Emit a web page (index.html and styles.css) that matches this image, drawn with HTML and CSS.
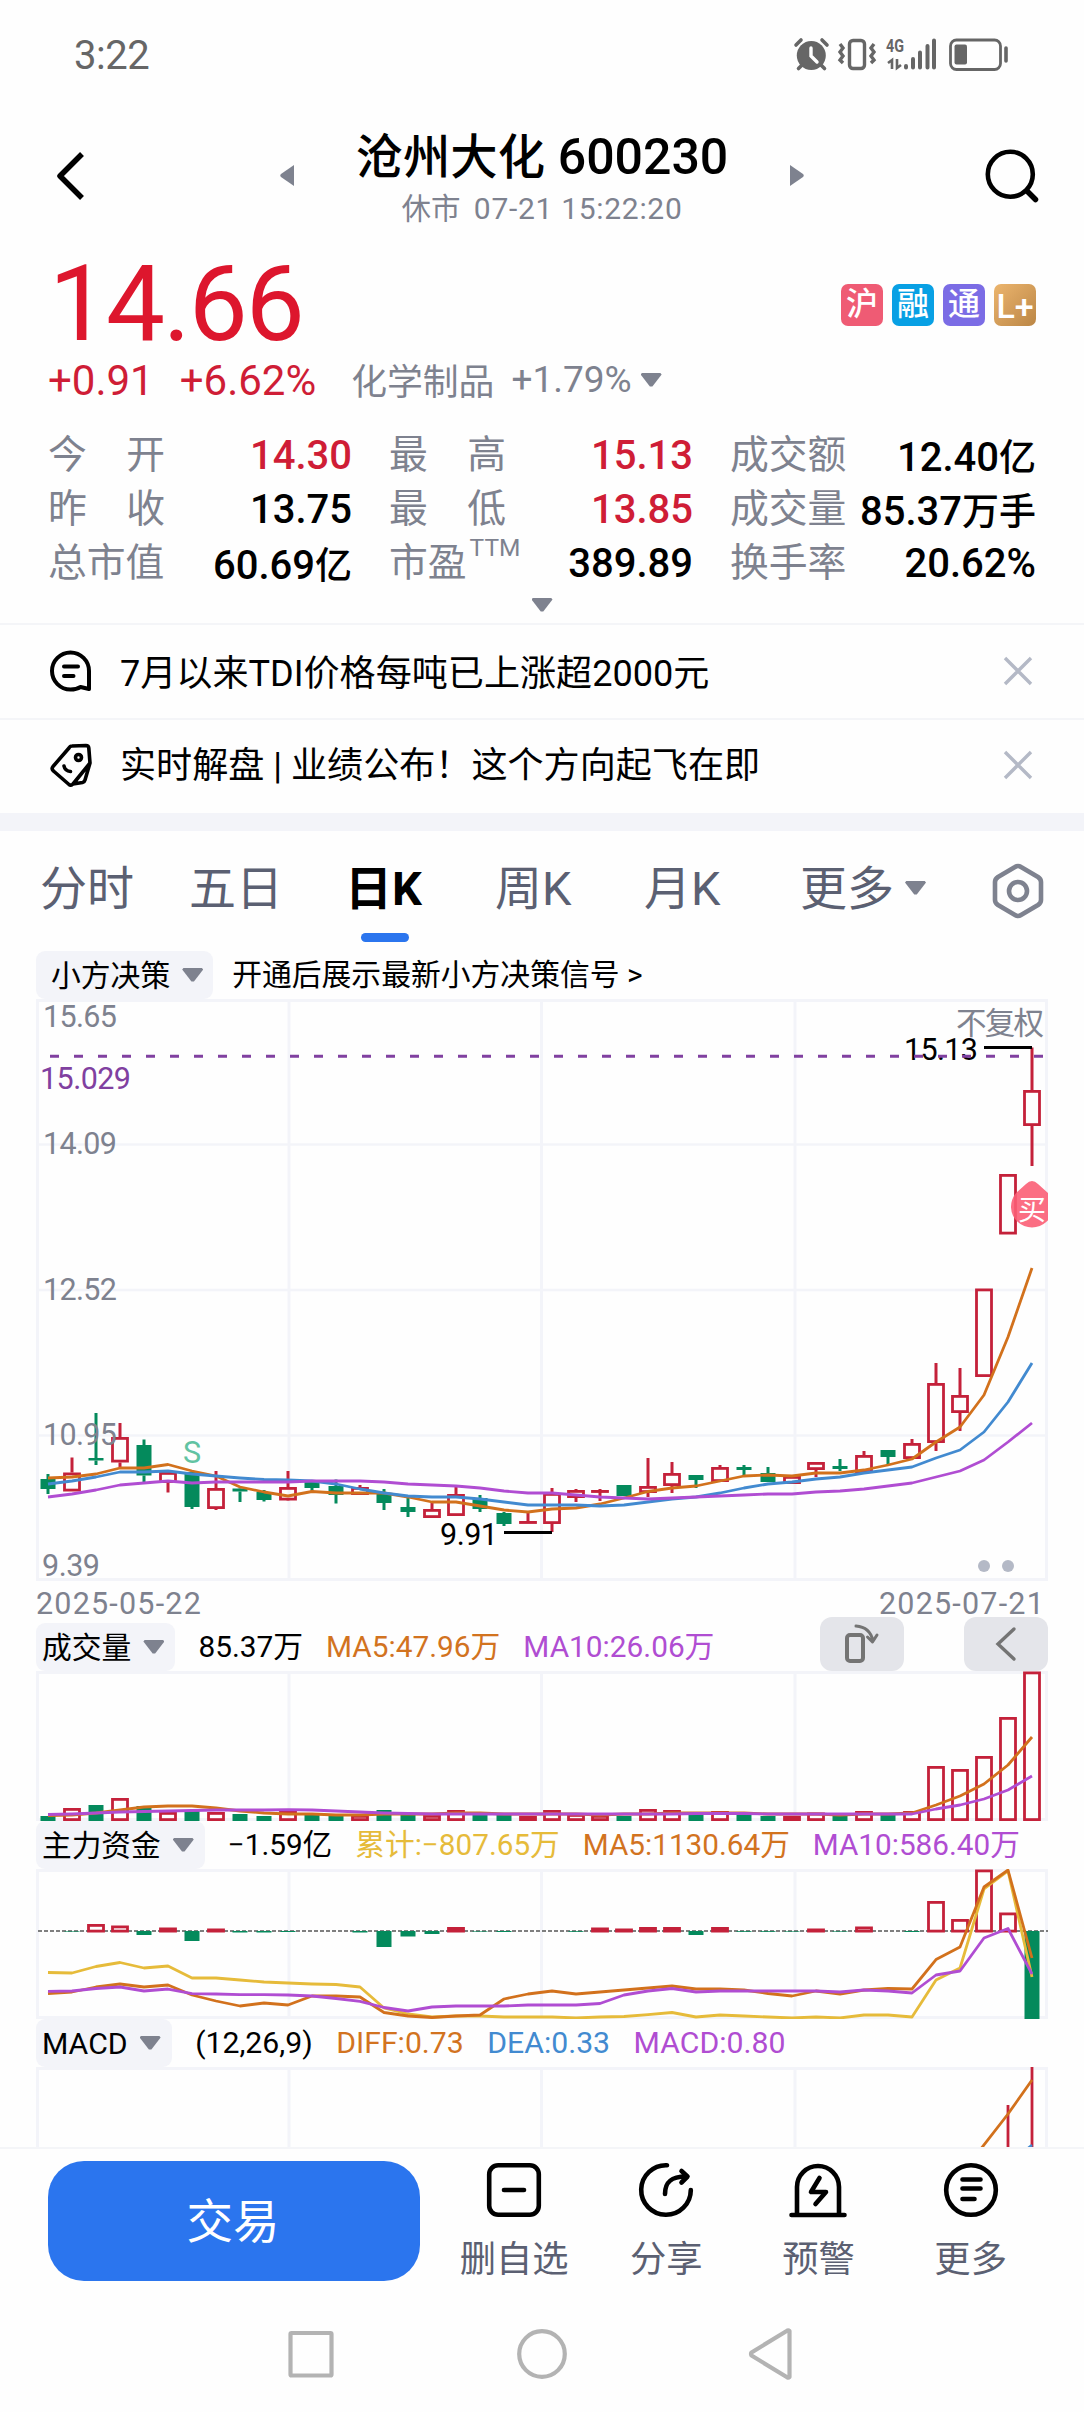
FILE: index.html
```
<!DOCTYPE html>
<html lang="zh-CN">

<head>
  <meta charset="UTF-8" />
  <meta name="viewport" content="width=device-width, initial-scale=1.0" />
  <title>沧州大化 600230</title>
  <link rel="stylesheet" href="styles.css">
</head>

<body>
  <div class="status-bar">
    <span class="time">3:22</span>
    <svg class="status-icons" width="220" height="36" viewBox="792 37 220 36" fill="none" stroke="#666">
      <!-- 闹钟 -->
      <circle cx="811.3" cy="55.5" r="14.5" fill="#666" stroke="none" />
      <path d="M811 48v8l6 6" stroke="#fff" stroke-width="3.4" stroke-linecap="round" />
      <path d="M796 45l5-5M827 45l-5-5M802 65l-3.500 3.500M821 65l3.500 3.500" stroke-width="3.600" stroke-linecap="round" />
      <!-- 震动 -->
      <rect x="849.500" y="40.500" width="15" height="28" rx="3.500" stroke-width="3.400" />
      <path d="M840 44l3 4-3 4 3 4-3 4 3 3M874 44l-3 4 3 4-3 4 3 4-3 3" stroke-width="3.400" />
      <!-- 信号 -->
      <text class="net" x="886" y="52" textLength="18" lengthAdjust="spacingAndGlyphs">4G</text>
      <path d="M888 63l4-3v9M897 59v9l4-3" stroke-width="2.600" />
      <path d="M906 66v1.500M913 59v8.500M920 52.500v15M927.500 46v21.500M934 40.500v27" stroke-width="4" stroke-linecap="round" />
      <!-- 电池 -->
      <rect x="950.500" y="40" width="50" height="29.500" rx="6" stroke-width="2.800" />
      <rect x="954.500" y="44.500" width="12.500" height="20" rx="2" fill="#666" stroke="none" />
      <path d="M1006 48v13" stroke-width="3.600" stroke-linecap="round" />
    </svg>
  </div>

  <div class="header">
    <svg class="back" width="30" height="52" viewBox="0 0 30 52"><path d="M26 4L4 26l22 22" fill="none" stroke="#000" stroke-width="5.500" stroke-linejoin="round" /></svg>
    <svg class="prev" width="14" height="21" viewBox="0 0 14 21"><path d="M14 0v21L1 12q-1.500-1.500 0-3z" fill="#7e828f" /></svg>
    <div class="title">
      <h1>沧州大化 <b>600230</b></h1>
      <p>休市 <span>07-21 15:22:20</span></p>
    </div>
    <svg class="next" width="14" height="21" viewBox="0 0 14 21"><path d="M0 0v21l13-9q1.500-1.500 0-3z" fill="#7e828f" /></svg>
    <svg class="search" width="56" height="56" viewBox="984 148 56 56" fill="none" stroke="#000" stroke-linecap="round"><circle cx="1010.300" cy="174.300" r="22.500" stroke-width="4.600" /><path d="M1027 191l8.500 8.500" stroke-width="5.500" /></svg>
  </div>

  <div class="quote">
    <div class="price">14.66</div>
    <div class="badges">
      <span class="hu">沪</span><span class="rong">融</span><span class="tong">通</span><span class="level">L+</span>
    </div>
  </div>
  <div class="change">
    <span class="up">+0.91</span><span class="up pct">+6.62%</span>
    <span class="sector">化学制品</span><span class="sector-pct">+1.79%</span><i class="tri"></i>
  </div>

  <div class="stats">
    <div><label><em>今</em><em>开</em></label><b class="up">14.30</b></div>
    <div><label><em>最</em><em>高</em></label><b class="up">15.13</b></div>
    <div><label>成交额</label><b>12.40<small>亿</small></b></div>
    <div><label><em>昨</em><em>收</em></label><b>13.75</b></div>
    <div><label><em>最</em><em>低</em></label><b class="up">13.85</b></div>
    <div><label>成交量</label><b>85.37<small>万手</small></b></div>
    <div><label>总市值</label><b>60.69<small>亿</small></b></div>
    <div><label class="pe">市盈<sup>TTM</sup></label><b>389.89</b></div>
    <div><label>换手率</label><b>20.62%</b></div>
  </div>
  <div class="expand"><i class="tri"></i></div>

  <div class="notice">
    <svg width="44" height="44" viewBox="0 0 44 44" fill="none" stroke="#000" stroke-width="4" stroke-linecap="round" stroke-linejoin="round">
      <path d="M40 40V22A18.500 18.500 0 1 0 21.500 40.500q6 0 10-2.500zM15 17.500h14M15 27h9.500" />
    </svg>
    <span>7月以来TDI价格每吨已上涨超2000元</span>
    <svg class="close" width="30" height="30" viewBox="0 0 30 30"><path d="M2 2l26 26M28 2L2 28" stroke="#b4b9c6" stroke-width="3.400" /></svg>
  </div>
  <div class="notice second">
    <svg width="44" height="44" viewBox="0 0 44 44" fill="none" stroke="#000" stroke-width="3.600" stroke-linecap="round" stroke-linejoin="round">
      <path d="M23 3l14-.5q2.500 0 2.800 2.500L41 20 24 41q-2 2-4 .5L4.500 28q-2.500-2-.5-4.500L20 5q1-2 3-2zM41 20l-5 17q-.5 2-2.500 2.500L24 41M15 23q1 5 6.500 5.500" /><circle cx="29.500" cy="14.500" r="3" />
    </svg>
    <span>实时解盘 | 业绩公布！这个方向起飞在即</span>
    <svg class="close" width="30" height="30" viewBox="0 0 30 30"><path d="M2 2l26 26M28 2L2 28" stroke="#b4b9c6" stroke-width="3.400" /></svg>
  </div>

  <div class="tabs">
    <span>分时</span>
    <span>五日</span>
    <span class="active">日K</span>
    <span>周K</span>
    <span>月K</span>
    <span class="more">更多<i class="tri"></i></span>
    <svg width="52" height="56" viewBox="0 0 52 56" fill="none" stroke="#7e828f" stroke-width="4.600" stroke-linejoin="round"><path d="M23 4q3-2 6 0l17 10q3 2 3 5v18q0 3-3 5L29 52q-3 2-6 0L6 42q-3-2-3-5V19q0-3 3-5z" /><circle cx="26" cy="28" r="9" /></svg>
  </div>

  <div class="ind decision">
    <div class="chip">小方决策<i class="tri"></i></div>
    <span>开通后展示最新小方决策信号 &gt;</span>
  </div>
  <svg id="kline" class="chart" width="1012" height="582" viewBox="36 999 1012 582"></svg>
  <div class="dates"><span>2025-05-22</span><span>2025-07-21</span></div>

  <div class="ind">
    <div class="chip">成交量<i class="tri"></i></div>
    <span>85.37万</span>
    <span class="orange">MA5:47.96万</span>
    <span class="purple">MA10:26.06万</span>
    <div class="tools">
      <button><svg width="38" height="42" viewBox="0 0 38 42" fill="none" stroke="#747474" stroke-width="4" stroke-linecap="round" stroke-linejoin="round"><rect x="4" y="12" width="16" height="26" rx="3" /><path d="M13 3q14 1 17 15M34 12l-4.500 7-5-5" stroke-width="3" /></svg></button>
      <button><svg width="22" height="36" viewBox="0 0 22 36" fill="none" stroke="#747474" stroke-width="3.400" stroke-linecap="round"><path d="M19 3L3 18l16 15" /></svg></button>
    </div>
  </div>
  <svg id="volume" class="chart" width="1012" height="150" viewBox="36 1671 1012 150"></svg>

  <div class="ind fund-row">
    <div class="chip">主力资金<i class="tri"></i></div>
    <span>−1.59亿</span>
    <span class="yellow">累计:−807.65万</span>
    <span class="orange">MA5:1130.64万</span>
    <span class="purple">MA10:586.40万</span>
  </div>
  <svg id="fund" class="chart" width="1012" height="150" viewBox="36 1869 1012 150"></svg>

  <div class="ind macd-row">
    <div class="chip">MACD<i class="tri"></i></div>
    <span>(12,26,9)</span>
    <span class="orange">DIFF:0.73</span>
    <span class="blue">DEA:0.33</span>
    <span class="purple">MACD:0.80</span>
  </div>
  <svg id="macd" class="chart" width="1012" height="80" viewBox="36 2067 1012 80"></svg>

  <div class="bottom-bar">
    <button class="trade">交易</button>
    <div class="action">
      <svg width="58" height="56" viewBox="0 0 58 56"><rect x="4.200" y="3.200" width="49.600" height="49.600" rx="9" /><path d="M19 28h20" /></svg>
      删自选
    </div>
    <div class="action">
      <svg width="58" height="56" viewBox="0 0 58 56"><path d="M30 3.200A24.800 24.800 0 1 0 53.800 28M28 32C28 20 34 14.500 49 14.500M44.500 9l6 5.500-6 6" /></svg>
      分享
    </div>
    <div class="action">
      <svg width="58" height="56" viewBox="0 0 58 56"><path d="M2.500 53h53M8 53V25a21 21 0 0 1 42 0v28M30.500 16L22 30h15L26.500 42" /></svg>
      预警
    </div>
    <div class="action">
      <svg width="58" height="56" viewBox="0 0 58 56"><circle cx="29" cy="28" r="24.800" /><path d="M20.500 17.500h18M20.500 26.500h18M20.500 37h12" /></svg>
      更多
    </div>
  </div>

  <div class="nav-bar">
    <svg width="504" height="52" viewBox="288 2328 504 52" fill="none" stroke="#b3b3b3" stroke-width="4.200" stroke-linejoin="round">
      <rect x="290.500" y="2333" width="41" height="42.500" rx="1" />
      <circle cx="542" cy="2354" r="22.800" />
      <path d="M789.500 2331v46q-1 1-2 .5l-36-22q-1-1.500 0-3l36-22q1-.5 2 .5z" />
    </svg>
  </div>

  <script src="chart.js"></script>
</body>

</html>
```
FILE: styles.css
```
* {
  box-sizing: border-box;
}

body {
  margin: 0;
  width: 1084px;
  height: 2412px;
  overflow: hidden;
  background: #fefefe;
  color: #000;
  font-family: Roboto, "Noto Sans CJK SC", sans-serif;
}

h1,
p {
  margin: 0;
}

i,
em {
  font-style: normal;
}

svg {
  display: block;
  flex: none;
}

button {
  border: 0;
  padding: 0;
  font-family: inherit;
}

.up {
  color: #cf1d36;
}

.orange {
  color: #d2731f;
}

.purple {
  color: #b04dd2;
}

.blue {
  color: #428ad0;
}

.yellow {
  color: #e6bb3a;
}

.tri {
  display: inline-block;
  flex: none;
  width: 21px;
  height: 14px;
  background: #7e828f;
  clip-path: polygon(6% 0, 94% 0, 100% 10%, 56% 96%, 44% 96%, 0 10%);
}

/* 状态栏 */
.status-bar {
  display: flex;
  justify-content: space-between;
  height: 110px;
  padding: 37px 72px 0 74px;
  color: #666;
}

.time {
  font-size: 40px;
  line-height: 37px;
  letter-spacing: -0.5px;
}

.net {
  font-size: 18px;
  font-weight: 700;
  fill: #666;
  stroke: none;
}

/* 标题 */
.header {
  display: flex;
  height: 140px;
  padding: 0 44px 0 56px;
}

.back {
  margin-top: 40px;
}

.prev {
  margin: 55px 0 0 194px;
}

.next {
  margin-top: 55px;
}

.title {
  width: 496px;
  text-align: center;
  padding-top: 17px;
}

.title h1 {
  font-size: 47.3px;
  line-height: 60px;
  font-weight: 500;
  white-space: nowrap;
}

.title b {
  font-size: 50px;
  font-weight: 500;
  margin-left: 1px;
}

.title p {
  font-size: 29.5px;
  line-height: 40px;
  margin-top: 1px;
  color: #7e828f;
}

.title p span {
  font-size: 30px;
  margin-left: 6px;
  letter-spacing: 0.7px;
}

.search {
  margin: 38px 0 0 180px;
}

/* 价格 */
.quote {
  display: flex;
  justify-content: space-between;
  height: 105px;
  padding: 0 48px 0 49px;
}

.price {
  font-size: 105px;
  line-height: 109px;
  letter-spacing: -2px;
  color: #dd162d;
}

.badges {
  display: flex;
  gap: 9px;
  margin-top: 34px;
}

.badges span {
  width: 42px;
  height: 42px;
  border-radius: 7px;
  color: #fff;
  font-size: 32px;
  font-weight: 500;
  line-height: 41px;
  text-align: center;
}

.hu {
  background: #ef5b74;
}

.rong {
  background: #08a0e4;
}

.tong {
  background: #7b6ce5;
}

.badges .level {
  background: linear-gradient(135deg, #ecb56e, #bb8645);
  font-size: 34px;
  line-height: 44px;
}

.change {
  display: flex;
  align-items: center;
  height: 50px;
  padding-left: 48px;
  font-size: 42px;
}

.pct {
  margin-left: 26px;
}

.sector,
.sector-pct {
  font-size: 35.8px;
  color: #7e828f;
  margin-left: 35px;
}

.sector,
.sector-pct {
  padding-bottom: 2px;
}

.sector-pct {
  font-size: 37px;
  margin-left: 17px;
  margin-right: 9px;
}

/* 行情指标 */
.stats {
  display: grid;
  grid-template-columns: 304px 304px 306px;
  grid-auto-rows: 54px;
  column-gap: 37px;
  padding: 23px 0 0 48px;
  height: 188px;
}

.stats div {
  display: flex;
  justify-content: space-between;
  align-items: center;
}

.stats label {
  display: flex;
  justify-content: space-between;
  width: 117px;
  height: 54px;
  font-size: 38.8px;
  line-height: 54px;
  color: #7e828f;
  white-space: nowrap;
}

.stats .pe {
  justify-content: flex-start;
}

.stats sup {
  font-size: 24.5px;
  line-height: 28px;
  margin: -2px 0 0 3px;
}

.stats b {
  font-size: 40px;
  font-weight: 500;
  white-space: nowrap;
}

.stats small {
  font-size: 37px;
}

.expand {
  display: flex;
  justify-content: center;
  height: 30px;
  padding-top: 5px;
}

/* 资讯条 */
.notice {
  display: flex;
  align-items: center;
  height: 95px;
  padding: 0 51px 2px 49px;
  border-top: 2px solid #f4f5f8;
  font-size: 36.1px;
}

.notice span {
  flex: 1;
  margin-left: 27px;
  padding-bottom: 2px;
}

.notice.second {
  height: 113px;
  padding-bottom: 3px;
  border-bottom: 18px solid #f3f4f9;
}

.notice.second span {
  padding-bottom: 6px;
}

/* 周期切换 */
.tabs {
  display: grid;
  grid-template-columns: 149px 156px 150px 149px 156px 192px 52px;
  height: 119px;
  padding: 22px 0 0 40px;
  font-size: 47px;
  line-height: 71px;
  color: #5b6072;
}

.tabs span {
  white-space: nowrap;
}

.tabs .active {
  color: #000;
  font-weight: 700;
  width: 80px;
}

.active::after {
  content: "";
  display: block;
  width: 48px;
  height: 9px;
  margin: 9px auto 0;
  border-radius: 4.5px;
  background: #2b75ee;
}

.more .tri {
  margin-left: 11px;
  vertical-align: 10px;
}

.tabs svg {
  margin-top: 10px;
}

/* 指标标题行 */
.ind {
  display: flex;
  align-items: flex-end;
  gap: 23px;
  height: 50px;
  padding: 0 36px;
  font-size: 29.8px;
  line-height: 49px;
  white-space: nowrap;
}

.chip {
  display: flex;
  align-items: center;
  gap: 12px;
  height: 48px;
  padding: 0 11px 0 6px;
  border-radius: 9px;
  background: #f3f4f9;
}

.decision {
  height: 49px;
  gap: 19px;
}

.decision .chip {
  padding: 0 10px 0 15px;
}

.tools {
  display: flex;
  gap: 60px;
  margin-left: auto;
}

.tools button {
  display: flex;
  align-items: center;
  justify-content: center;
  width: 84px;
  height: 54px;
  border-radius: 12px;
  background: #e4e5ea;
}

.fund-row,
.macd-row {
  height: 48px;
}

.fund-row {
  font-size: 29.7px;
}

.macd-row {
  gap: 23.5px;
  font-size: 30.2px;
}

.chart {
  margin-left: 36px;
}

.chart text {
  font-size: 30.5px;
  fill: #7e828f;
}

.chart .cost {
  fill: #8040a0;
}

.chart .mark {
  fill: #000;
}

.chart .sell {
  fill: #62c3a2;
}

.chart .buy {
  fill: #fff;
  font-size: 28px;
}

.dates {
  display: flex;
  justify-content: space-between;
  height: 40px;
  padding: 0 39px 0 36px;
  font-size: 30.5px;
  line-height: 45px;
  letter-spacing: 1.2px;
  color: #7e828f;
}

/* 底部操作 */
.bottom-bar {
  display: flex;
  height: 170px;
  padding: 12px 0 0 48px;
  border-top: 2px solid #f4f5f8;
}

.trade {
  width: 372px;
  height: 120px;
  padding: 0 2px 7px 0;
  margin-right: 18px;
  border-radius: 36px;
  background: #2b75ee;
  color: #fff;
  font-size: 46.5px;
}

.action {
  display: flex;
  flex-direction: column;
  align-items: center;
  gap: 15px;
  width: 152.200px;
  margin-top: 1px;
  font-size: 36.300px;
  line-height: 54px;
  color: #5b6072;
}

.action svg {
  fill: none;
  stroke: #000;
  stroke-width: 4.6;
  stroke-linecap: round;
  stroke-linejoin: round;
}

.nav-bar {
  padding: 11px 0 0 288px;
}
```
FILE: chart.js
```
const RED = '#c4213a';
const GREEN = '#048a5c';
const ORANGE = '#d2711c';
const BLUE = '#428ad0';
const PURPLE = '#b04dd2';
const YELLOW = '#e6bb3a';
const GRID = '#f3f4f9';

// 第 i 根柱子的中心
function cx(i) {
  return 48 + 24 * i;
}

function line(x1, y1, x2, y2, color, w, extra) {
  return `<line x1="${x1}" y1="${y1}" x2="${x2}" y2="${y2}" stroke="${color}" stroke-width="${w}" ${extra || ''}/>`;
}

function curve(ys, color) {
  const pts = ys.map((y, i) => cx(i) + ',' + y).join(' ');
  return `<polyline points="${pts}" fill="none" stroke="${color}" stroke-width="2.8" stroke-linejoin="round"/>`;
}

// 红色空心, 绿色实心
function bar(i, type, top, bottom) {
  if (type == 'r') {
    const h = Math.max(bottom - top - 2.8, 0.1);
    return `<rect x="${cx(i) - 7.5}" y="${top + 1.4}" width="15" height="${h}" fill="none" stroke="${RED}" stroke-width="2.8"/>`;
  }
  return `<rect x="${cx(i) - 7.5}" y="${top}" width="15" height="${bottom - top}" fill="${GREEN}"/>`;
}

function label(x, y, text, len, cls) {
  return `<text x="${x}" y="${y}" textLength="${len}" class="${cls || ''}">${text}</text>`;
}

function grid(top, bottom, rows) {
  let s = `<rect x="37.5" y="${top + 1.5}" width="1009" height="${bottom - top - 3}" fill="none" stroke="${GRID}" stroke-width="3"/>`;
  [289, 541.5, 795].forEach((x) => (s += line(x, top, x, bottom, GRID, 3)));
  (rows || []).forEach((y) => (s += line(38, y, 1046, y, GRID, 2.6)));
  return s;
}

// [类型, 最高, 实体上沿, 实体下沿, 最低]
const candles = [
  ['g', 1474, 1479, 1489, 1494], ['r', 1457.5, 1472.5, 1491.5, 1491.5], ['g', 1413, 1458, 1460.5, 1465],
  ['r', 1423, 1437, 1462.5, 1467], ['g', 1439.5, 1445, 1475.5, 1482], ['r', 1472, 1472, 1483, 1492.5],
  ['g', 1472, 1472, 1507, 1509], ['r', 1471, 1488, 1509, 1510], ['g', 1488, 1488.5, 1491.5, 1502],
  ['g', 1490, 1492, 1500, 1501.5], ['r', 1471, 1487, 1500.5, 1501], ['g', 1482, 1482, 1488, 1491],
  ['g', 1479.5, 1486, 1495, 1503.5], ['r', 1485, 1487, 1495, 1495], ['g', 1489, 1493, 1503, 1510],
  ['g', 1498, 1507, 1512, 1517], ['r', 1503, 1509, 1518, 1518], ['r', 1487, 1494, 1516, 1516],
  ['g', 1495, 1498, 1509, 1512], ['g', 1512, 1513, 1524, 1526], ['r', 1512, 1521, 1523, 1523],
  ['r', 1488, 1493, 1524, 1532], ['r', 1489, 1490, 1498, 1502], ['r', 1489, 1490, 1492, 1501],
  ['g', 1485, 1485, 1496, 1496], ['r', 1458, 1486, 1493, 1497], ['r', 1462, 1473, 1486, 1493],
  ['g', 1475, 1475, 1480, 1488], ['r', 1465, 1467, 1482, 1482], ['g', 1465, 1467, 1470, 1477],
  ['g', 1467, 1473, 1482, 1482], ['r', 1476, 1476, 1484, 1484], ['r', 1462, 1462, 1470, 1477],
  ['g', 1459, 1466, 1469, 1471], ['r', 1451, 1455, 1473, 1473], ['g', 1450, 1450, 1457, 1465],
  ['r', 1439, 1443, 1459, 1459], ['r', 1363, 1383, 1443, 1451], ['r', 1368, 1395, 1413, 1431],
  ['r', 1288.5, 1288.5, 1377, 1377], ['r', 1174, 1174, 1234.5, 1234.5], ['r', 1047.5, 1090, 1126, 1166],
];
const ma5 = [1478, 1477, 1474, 1468, 1468, 1464.5, 1471, 1476, 1487, 1492, 1496, 1491.5, 1493, 1493, 1493, 1497, 1502, 1502, 1506, 1510, 1512, 1509, 1508, 1504, 1498, 1491.5, 1488, 1486, 1481, 1476, 1475, 1476, 1473, 1473, 1470, 1465, 1459, 1442, 1427, 1395, 1337, 1268];
const ma10 = [1484, 1481, 1477, 1472, 1472, 1471, 1474, 1476, 1478, 1479.5, 1480, 1481, 1484, 1489, 1493, 1496, 1497, 1497, 1499, 1502, 1505, 1505, 1505, 1506, 1505, 1502, 1499, 1497, 1493, 1488, 1484, 1482, 1479, 1477, 1473, 1470, 1467, 1458, 1450, 1432, 1402, 1363];
const ma20 = [1497, 1494, 1490, 1485, 1483, 1481, 1483, 1482, 1482, 1482, 1482, 1481, 1481, 1481, 1482, 1484, 1485, 1486, 1488, 1491, 1493, 1493, 1495, 1497, 1498, 1499, 1498, 1497, 1496, 1495, 1494, 1494, 1492, 1491, 1489, 1486, 1483, 1477, 1471, 1460, 1442, 1423];

let k = grid(999, 1581, [1144.5, 1290, 1435.5]);
candles.forEach((c, i) => {
  const color = c[0] == 'r' ? RED : GREEN;
  if (c[2] > c[1]) k += line(cx(i), c[1], cx(i), c[2], color, 3);
  if (c[4] > c[3]) k += line(cx(i), c[3], cx(i), c[4], color, 3);
  k += bar(i, c[0], c[2], c[3]);
});
k += curve(ma5, ORANGE) + curve(ma10, BLUE) + curve(ma20, PURPLE);
k += label(43, 1027, '15.65', 74) + label(43, 1154, '14.09', 74) + label(43, 1300, '12.52', 74);
k += label(43, 1445, '10.95', 74) + label(42, 1576, '9.39', 58) + label(40, 1089, '15.029', 91, 'cost');
k += label(956, 1034, '不复权', 88);
k += label(904, 1060, '15.13', 74, 'mark') + line(984, 1047.5, 1032, 1047.5, '#000', 3);
k += label(440, 1545, '9.91', 58, 'mark') + line(504, 1532.5, 552, 1532.5, '#000', 3);
k += line(50, 1056.3, 1043, 1056.3, '#8040a0', 3, 'stroke-dasharray="9 15"');
k += label(183, 1463, 'S', 19, 'sell');
k += '<path d="M1032 1181q3 0 6 3l10 9a21 21 0 1 1-32 0l10-9q3-3 6-3z" fill="#fb5e76" fill-opacity=".9"/>' + label(1018, 1220, '买', 28, 'buy');
k += '<circle cx="984" cy="1566" r="6" fill="#b4b9c6"/><circle cx="1008" cy="1566" r="6" fill="#b4b9c6"/>';
document.getElementById('kline').innerHTML = k;

// 成交量
const volTop = [1816, 1808, 1805, 1798, 1806, 1812, 1811, 1812, 1814, 1816, 1811, 1815, 1816, 1815, 1810, 1815, 1815, 1810, 1815, 1815, 1816, 1810, 1814, 1815, 1816, 1809, 1810, 1815, 1811, 1815, 1816, 1816, 1812.5, 1816, 1811, 1815, 1811, 1766, 1769, 1756, 1717, 1671.5];
const vol5 = [1815.5, 1815, 1813, 1810, 1807, 1806, 1806, 1808, 1811, 1813, 1814, 1814, 1815, 1815, 1814, 1814, 1814, 1813, 1813, 1814, 1814, 1814, 1814, 1815, 1814, 1814, 1813, 1813, 1813, 1813, 1814, 1814, 1814, 1815, 1814, 1814, 1813, 1805, 1796, 1784, 1765, 1737];
const vol10 = [1814.5, 1814, 1813, 1812, 1811.5, 1811, 1810.5, 1810, 1810, 1810, 1809.6, 1810, 1811, 1812, 1813, 1813.5, 1814, 1814, 1814, 1814, 1814, 1814, 1814, 1814, 1814, 1814, 1814, 1813.5, 1813.5, 1813.5, 1814, 1814, 1814, 1814, 1814, 1814, 1814, 1809, 1805, 1799, 1790, 1776];
let v = grid(1671, 1821);
volTop.forEach((y, i) => (v += bar(i, candles[i][0], y, 1821)));
v += curve(vol5, ORANGE) + curve(vol10, PURPLE);
document.getElementById('volume').innerHTML = v;

// 主力资金, 正数在零轴上方
const flow = [0, -0.6, 7, 5.5, -4, 3.5, -10, 2.5, -1.5, -1.5, -1, 0, 0, -1.5, -16, -5.5, -3, 4, -0.6, -1, 0, 0, -0.8, 3.5, 2.5, 4, 4, -4, 4, -0.8, -0.8, -0.6, 2.5, -0.6, 4.5, 0, -1, 30, 12, 61.5, 18.5, -88];
const total = [1972.5, 1973, 1966.5, 1962.5, 1968, 1966, 1978, 1978, 1980, 1982, 1983, 1984, 1984.5, 1987, 2008, 2014, 2017, 2016, 2016, 2017, 2017, 2017, 2018, 2017, 2016.5, 2014.6, 2012.5, 2017, 2015, 2016, 2017, 2018, 2017, 2018, 2015, 2015, 2017, 1980, 1968, 1889, 1871, 1977];
const flow5 = [1993.6, 1992, 1987, 1984, 1987, 1985, 1995, 2001, 2006, 2003, 2005, 1996, 1996, 1997, 2012.5, 2016, 2017.5, 2016, 2015, 1999, 1994, 1991, 1994, 1992, 1990, 1988, 1986, 1989, 1989, 1990, 1993.5, 1996, 1991, 1994, 1990, 1988.5, 1989, 1959.6, 1947, 1887, 1870, 1958];
const flow10 = [1991.4, 1991, 1988.5, 1987, 1991, 1989, 1993.6, 1994, 1994.6, 1994.6, 1995, 1996, 1998.5, 2001.4, 2007.5, 2011, 2007, 2006, 2006, 2006, 2005, 2005, 2005, 2003.5, 1995, 1991, 1988.5, 1992, 1991, 1991, 1991, 1991, 1991, 1992, 1990, 1991, 1993, 1975, 1971, 1938, 1928.5, 1974];
let f = grid(1869, 2019);
f += line(38, 1931, 1048, 1931, '#555', 1.6, 'stroke-dasharray="4 2"');
flow.forEach((n, i) => {
  if (n > 0) f += bar(i, 'r', 1931 - n, 1932.5);
  if (n < 0) f += bar(i, 'g', 1931, 1931 - n);
});
f += curve(total, YELLOW) + curve(flow5, ORANGE) + curve(flow10, PURPLE);
document.getElementById('fund').innerHTML = f;

// MACD
let m = grid(2067, 2250);
m += line(1008, 2105, 1008, 2150, RED, 2.8) + line(1032, 2067, 1032, 2150, RED, 2.8);
m += `<path d="M980 2150L1008 2114L1032 2080" fill="none" stroke="${ORANGE}" stroke-width="2.800"/>`;
m += line(1027, 2149, 1032, 2145, BLUE, 2.6);
document.getElementById('macd').innerHTML = m;
```
